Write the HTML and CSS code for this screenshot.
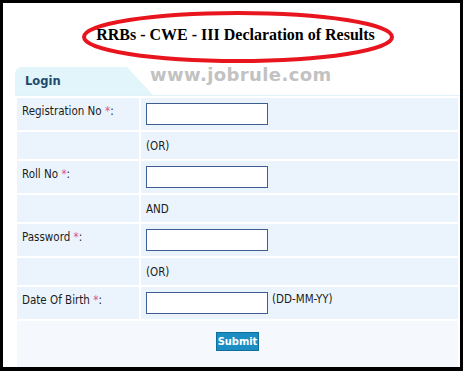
FILE: index.html
```html
<!DOCTYPE html>
<html>
<head>
<meta charset="utf-8">
<link rel="stylesheet" href="styles.css">
</head>
<body>
<div class="frame">
  <div class="title-area">
    <h1 class="title">RRBs - CWE - III Declaration of Results</h1>
    <svg class="ellipse" width="316" height="56" viewBox="0 0 316 56"><ellipse cx="158" cy="28" rx="154" ry="24" fill="none" stroke="#e8151f" stroke-width="4"/></svg>
  </div>
  <div class="panel">
    <div class="tabbar">
      <div class="tab">Login</div>
      <div class="watermark">www.jobrule.com</div>
    </div>
    <table class="form">
      <colgroup><col class="col-label"><col class="col-value"></colgroup>
      <tr class="row-input">
        <td class="label">Registration No <span class="req">*</span>:</td>
        <td class="value"><input class="field" type="text"></td>
      </tr>
      <tr class="row-text">
        <td class="label"></td>
        <td class="value">(OR)</td>
      </tr>
      <tr class="row-input">
        <td class="label">Roll No <span class="req">*</span>:</td>
        <td class="value"><input class="field" type="text"></td>
      </tr>
      <tr class="row-text">
        <td class="label"></td>
        <td class="value">AND</td>
      </tr>
      <tr class="row-input">
        <td class="label">Password <span class="req">*</span>:</td>
        <td class="value"><input class="field" type="password"></td>
      </tr>
      <tr class="row-text">
        <td class="label"></td>
        <td class="value">(OR)</td>
      </tr>
      <tr class="row-input">
        <td class="label">Date Of Birth <span class="req">*</span>:</td>
        <td class="value"><input class="field" type="text"><span class="hint">(DD-MM-YY)</span></td>
      </tr>
      <tr class="row-submit">
        <td class="submit-cell" colspan="2"><button class="submit" type="button">Submit</button></td>
      </tr>
    </table>
  </div>
</div>
</body>
</html>
```
FILE: styles.css
```css
html, body {
  margin: 0;
  padding: 0;
  background: #000;
}
.frame {
  box-sizing: border-box;
  width: 463px;
  height: 371px;
  border: 3px solid #000;
  border-bottom-width: 4px;
  background: #fff;
  overflow: hidden;
  font-family: "DejaVu Sans", Verdana, sans-serif;
}
.title-area {
  position: relative;
  height: 64px;
  display: flex;
  align-items: center;
  justify-content: center;
}
.title {
  margin: 0;
  font-family: "Liberation Serif", "Times New Roman", serif;
  font-weight: bold;
  font-size: 16px;
  color: #000;
  padding-left: 8px;
}
.ellipse {
  position: absolute;
  left: 77px;
  top: 6px;
}
.panel {
  margin-left: 12px;
}
.tabbar {
  position: relative;
  height: 28px;
  border-bottom: 1px solid #e1f3f8;
}
.tab {
  box-sizing: border-box;
  width: 138px;
  height: 28px;
  background: #e2f5fa;
  border-top-left-radius: 7px;
  clip-path: polygon(0 0, 112px 0, 138px 100%, 0 100%);
  padding-left: 10px;
  line-height: 29px;
  font-size: 11.5px;
  font-weight: bold;
  color: #1f4b6e;
}
.watermark {
  position: absolute;
  left: 135px;
  top: -3px;
  font-size: 18px;
  font-weight: bold;
  color: #c2c2c2;
  letter-spacing: 0.4px;
}
.form {
  border-collapse: separate;
  border-spacing: 2px;
  table-layout: fixed;
  width: 445px;
  font-family: "DejaVu Sans Condensed", "DejaVu Sans", sans-serif;
  font-size: 11.5px;
  color: #1c1c1c;
}
.col-label {
  width: 122px;
}
.form td {
  background: #ebf4fc;
  padding: 0 0 0 5px;
  box-sizing: border-box;
}
.label {
  vertical-align: top;
  padding-top: 6px !important;
}
.value {
  vertical-align: middle;
}
.row-input td {
  height: 32px;
}
.row-text td {
  height: 27px;
}
.row-text .value {
  padding-top: 1px;
}
.req {
  color: #e0557a;
}
.field {
  box-sizing: border-box;
  width: 122px;
  height: 22px;
  margin: 0;
  border: 1px solid #3f5f92;
  background: #fff;
  vertical-align: middle;
  padding: 0 2px;
}
.hint {
  margin-left: 4px;
  vertical-align: middle;
  position: relative;
  top: -4px;
}
.row-submit td {
  background: #f5f9fe;
  height: 50px;
  text-align: center;
  vertical-align: top;
  padding: 11px 0 0 0;
}
.submit {
  box-sizing: border-box;
  height: 19px;
  width: 43px;
  margin: 0;
  padding: 0;
  background: #1c8dc3;
  border: 1px solid #0f6e9c;
  color: #fff;
  font-family: "DejaVu Sans Condensed", "DejaVu Sans", sans-serif;
  font-weight: bold;
  font-size: 11px;
}
```
